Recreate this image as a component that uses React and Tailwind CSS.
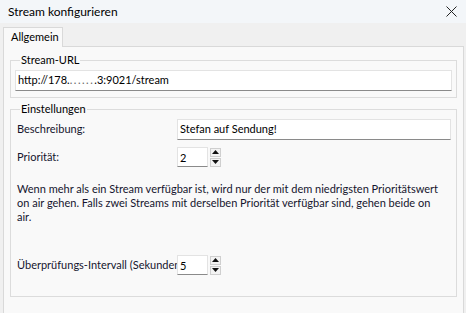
import React from 'react';

function Spin({ value }) {
  return (
    <div className="flex items-center">
      <div className="w-[31px] h-[20px] bg-white border border-[#e3e3e3] border-b-[#8a8a8a] pl-[2px] flex items-center leading-none text-black">
        {value}
      </div>
      <div className="ml-[2px] flex flex-col gap-[1px]">
        <div className="w-[11px] h-[9px] border border-[#cfcfcf] bg-[#f3f3f3] flex items-center justify-center">
          <svg width="7" height="4" viewBox="0 0 7 4"><path d="M0 4 L3.5 0 L7 4 Z" fill="#111" /></svg>
        </div>
        <div className="w-[11px] h-[9px] border border-[#cfcfcf] bg-[#f3f3f3] flex items-center justify-center">
          <svg width="7" height="4" viewBox="0 0 7 4"><path d="M0 0 L3.5 4 L7 0 Z" fill="#111" /></svg>
        </div>
      </div>
    </div>
  );
}

export default function App() {
  return (
    <div className="w-[466px] h-[313px] overflow-hidden bg-[#f0f0f0] font-['Lato','Noto_Sans',sans-serif] text-[11px] text-[#15152e]">
      {/* title bar */}
      <div className="h-[23px] bg-[#f3f6f9] flex items-center justify-between pl-[8px] pr-[8px]">
        <span className="text-black text-[12px]">Stream konfigurieren</span>
        <svg width="11" height="11" viewBox="0 0 11 11" className="mr-[1px]">
          <path d="M0.5 0.5 L10.5 10.5 M10.5 0.5 L0.5 10.5" stroke="#222" strokeWidth="1" />
        </svg>
      </div>

      <div className="pt-[4px] pl-[3px]">
        {/* tab header */}
        <div className="relative z-10 -mb-px w-[60px] h-[20px] bg-[#f9f9f9] border border-b-0 border-[#d9d9d9] pl-[7px] flex items-center text-black">
          Allgemein
        </div>

        {/* tab page */}
        <div className="w-[461px] h-[270px] bg-[#f9f9f9] border border-[#d9d9d9] px-[6px]">
          <fieldset className="min-w-0 mt-[5px] border border-[#dcdcdc] px-[4px] pt-[2px] pb-[6px]">
            <legend className="ml-[5px] px-[1px] leading-[16px] text-black">Stream-URL</legend>
            <div className="h-[21px] bg-white border border-[#e3e3e3] border-b-[#8a8a8a] pl-[2px] flex items-center text-black">
              http://178.<span className="tracking-[1.5px] text-[#666]">......</span>.3:9021/stream
            </div>
          </fieldset>

          <fieldset className="min-w-0 mt-[3px] h-[196px] border border-[#dcdcdc] pl-[6px] pr-[5px] pt-[2px]">
            <legend className="ml-[3px] px-[1px] leading-[16px] text-black">Einstellungen</legend>

            <div className="flex items-center h-[21px]">
              <div className="w-[160px] shrink-0">Beschreibung:</div>
              <div className="flex-1 h-[21px] bg-white border border-[#e3e3e3] border-b-[#8a8a8a] pl-[2px] flex items-center text-black">
                Stefan auf Sendung!
              </div>
            </div>

            <div className="flex items-center mt-[7px]">
              <div className="w-[160px] shrink-0">Priorität:</div>
              <Spin value="2" />
            </div>

            <p className="mt-[15px] leading-[14px] whitespace-nowrap">
              Wenn mehr als ein Stream verfügbar ist, wird nur der mit dem niedrigsten Prioritätswert
              <br />
              on air gehen. Falls zwei Streams mit derselben Priorität verfügbar sind, gehen beide on
              <br />
              air.
            </p>

            <div className="flex items-center mt-[31px]">
              <div className="w-[160px] shrink-0 overflow-hidden whitespace-nowrap">Überprüfungs-Intervall (Sekunden):</div>
              <Spin value="5" />
            </div>
          </fieldset>
        </div>
      </div>
    </div>
  );
}
